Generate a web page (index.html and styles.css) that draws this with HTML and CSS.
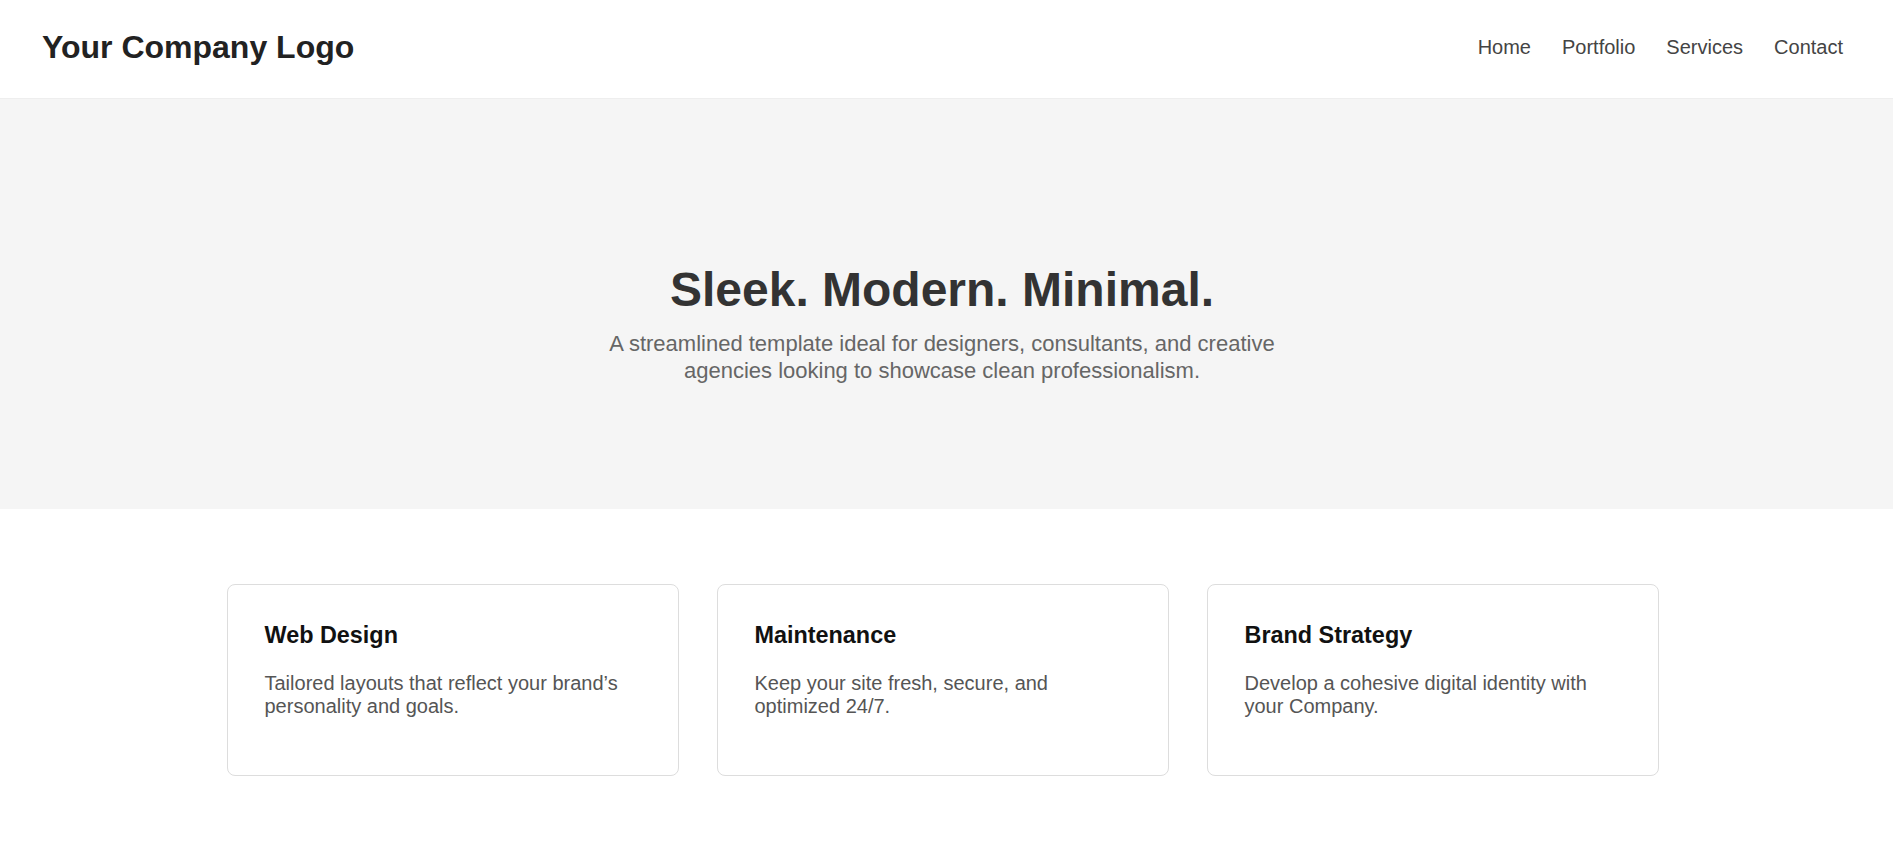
FILE: index.html
```html
<!DOCTYPE html>
<html lang="en">
<head>
<meta charset="utf-8">
<title>Your Company</title>
<link rel="stylesheet" href="styles.css">
</head>
<body>
<header class="site-header">
  <div class="logo">Your Company Logo</div>
  <nav class="main-nav">
    <a href="#">Home</a>
    <a href="#">Portfolio</a>
    <a href="#">Services</a>
    <a href="#">Contact</a>
  </nav>
</header>
<section class="hero">
  <h1 class="hero-title">Sleek. Modern. Minimal.</h1>
  <p class="hero-sub">A streamlined template ideal for designers, consultants, and creative agencies looking to showcase clean professionalism.</p>
</section>
<section class="services">
  <div class="cards">
    <div class="card">
      <h3 class="card-title">Web Design</h3>
      <p class="card-text">Tailored layouts that reflect your brand’s personality and goals.</p>
    </div>
    <div class="card">
      <h3 class="card-title">Maintenance</h3>
      <p class="card-text">Keep your site fresh, secure, and optimized 24/7.</p>
    </div>
    <div class="card">
      <h3 class="card-title">Brand Strategy</h3>
      <p class="card-text">Develop a cohesive digital identity with your Company.</p>
    </div>
  </div>
</section>
</body>
</html>
```
FILE: styles.css
```css
* { box-sizing: border-box; }
html, body { margin: 0; padding: 0; }
body {
  font-family: "Liberation Sans", Arial, sans-serif;
  background: #fff;
  color: #333;
}
.site-header {
  display: flex;
  align-items: center;
  justify-content: space-between;
  padding: 29px 50px 32px 42px;
  border-bottom: 1px solid #eee;
}
.logo {
  font-size: 32px;
  font-weight: bold;
  color: #222;
  line-height: 37px;
}
.main-nav {
  display: flex;
  gap: 31px;
}
.main-nav a {
  font-size: 20px;
  color: #444;
  text-decoration: none;
}
.hero {
  background: #f5f5f5;
  text-align: center;
  padding: 163px 9px 125px 0;
}
.hero-title {
  margin: 0 0 14px;
  font-size: 48px;
  font-weight: bold;
  color: #333;
  line-height: 55px;
}
.hero-sub {
  margin: 0 auto;
  max-width: 700px;
  font-size: 22px;
  line-height: 26.5px;
  color: #666;
}
.services {
  padding: 75px 8px 70px 0;
}
.cards {
  display: grid;
  grid-template-columns: repeat(3, 452px);
  gap: 38px;
  justify-content: center;
}
.card {
  border: 1px solid #ddd;
  border-radius: 8px;
  padding: 37px 37px 37px 37px;
  font-size: 20px;
}
.card-title {
  margin: 0 0 23px;
  font-size: 1.17em;
  font-weight: bold;
  color: #111;
  line-height: 27px;
}
.card-text {
  margin: 0 0 20px;
  color: #555;
  line-height: 23px;
}
```
